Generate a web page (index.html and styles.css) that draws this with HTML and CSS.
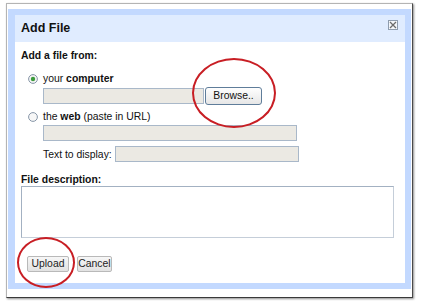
FILE: index.html
```html
<!DOCTYPE html>
<html>
<head>
<meta charset="utf-8">
<link rel="stylesheet" href="styles.css">
</head>
<body>
<div class="frame">
  <div class="dialog">
    <div class="titlebar">
      <span class="title">Add File</span>
      <span class="close"><svg width="8" height="8" viewBox="0 0 8 8"><path d="M1 1L7 7M7 1L1 7" stroke="#6b6b6b" stroke-width="1.3"/></svg></span>
    </div>
    <div class="content">
      <div class="heading">Add a file from:</div>
      <div class="radio-row r1">
        <svg class="radio" width="10" height="10" viewBox="0 0 10 10"><circle cx="5" cy="5" r="4.4" fill="#f4f4f4" stroke="#8796a8" stroke-width="1"/><circle cx="5" cy="5" r="2.2" fill="#3c9b3c"/></svg>
        <span>your <b>computer</b></span>
      </div>
      <div class="file-row">
        <input class="field file-field" type="text">
        <button class="browse">Browse..</button>
      </div>
      <div class="radio-row r2">
        <svg class="radio" width="10" height="10" viewBox="0 0 10 10"><circle cx="5" cy="5" r="4.4" fill="#f7f7f7" stroke="#8796a8" stroke-width="1"/></svg>
        <span>the <b>web</b> (paste in URL)</span>
      </div>
      <input class="field url-field" type="text">
      <div class="display-row">
        <span class="display-label">Text to display:</span>
        <input class="field display-field" type="text">
      </div>
      <div class="heading desc-label">File description:</div>
      <div class="textarea"></div>
      <div class="actions">
        <button class="btn upload">Upload</button>
        <button class="btn cancel">Cancel</button>
      </div>
    </div>
  </div>
  <span class="mark mark-browse"></span>
  <span class="mark mark-upload"></span>
</div>
</body>
</html>
```
FILE: styles.css
```css
html, body {
  margin: 0;
  padding: 0;
  background: #ffffff;
}
body {
  width: 424px;
  height: 302px;
  overflow: hidden;
  font-family: "Liberation Sans", Arial, sans-serif;
  font-size: 10.4px;
  color: #111;
}
.frame {
  position: relative;
  box-sizing: border-box;
  width: 407px;
  height: 295px;
  margin: 3px 0 0 6px;
  border: 1px solid;
  border-color: #b4b4b4 #4a4a4a #3a3a3a #b4b4b4;
  box-shadow: 1px 1px 2px rgba(0,0,0,0.45);
  padding: 5px 1px 8px 1px;
  background: #fff;
}
.dialog {
  box-sizing: border-box;
  height: 100%;
  background: #c3d9ff;
  padding: 6px 6px 6px 7px;
  display: flex;
  flex-direction: column;
}
.titlebar {
  height: 27px;
  background: #e0ecff;
  display: flex;
  align-items: flex-start;
  justify-content: space-between;
  padding: 0 7px 0 6px;
}
.title {
  font-size: 12.5px;
  font-weight: bold;
  line-height: 27px;
  color: #111;
}
.close {
  box-sizing: border-box;
  margin-top: 5px;
  width: 10px;
  height: 10px;
  border: 1px solid #8e9cae;
  background: #f4f7fb;
  display: flex;
  align-items: center;
  justify-content: center;
}
.close svg { display: block; }
.content {
  flex: 1;
  background: #fff;
  padding: 7px 6px 0 6px;
}
.heading {
  font-weight: bold;
  line-height: 13px;
}
.radio-row {
  display: flex;
  align-items: center;
  height: 13px;
  line-height: 13px;
  padding-left: 7px;
}
.radio { display: block; margin-right: 5px; }
.r1 { margin-top: 10px; }
.r2 { margin-top: 5px; }
.field {
  display: block;
  box-sizing: border-box;
  height: 16px;
  margin: 0;
  padding: 0;
  border: 1px solid #a9b8c9;
  background: #ebe9e3;
  appearance: none;
  -webkit-appearance: none;
  border-radius: 0;
  outline: none;
}
.file-row {
  display: flex;
  align-items: flex-start;
  margin-top: 2px;
  padding-left: 22px;
}
.file-field { width: 161px; margin-top: 1px; }
.browse {
  box-sizing: border-box;
  width: 57px;
  height: 18px;
  margin: 0 0 0 1px;
  padding: 0;
  border: 1px solid #5f7d9a;
  border-radius: 3px;
  background: linear-gradient(#fefefe, #e6e6e6);
  font-family: "Liberation Sans", Arial, sans-serif;
  font-size: 10.4px;
  color: #111;
  line-height: 16px;
}
.url-field {
  width: 254px;
  margin: 2px 0 0 22px;
}
.display-row {
  display: flex;
  align-items: center;
  margin-top: 5px;
  padding-left: 22px;
  height: 16px;
}
.display-label { width: 72px; }
.display-field { width: 184px; }
.desc-label { margin-top: 11px; }
.textarea {
  box-sizing: border-box;
  width: 373px;
  height: 52px;
  border: 1px solid #a9b5c4;
  border-color: #a3b1c2 #c5ced9 #c5ced9 #a3b1c2;
  background: #fff;
}
.actions {
  display: flex;
  gap: 8px;
  margin-top: 18px;
  padding-left: 6px;
}
.btn {
  box-sizing: border-box;
  height: 16px;
  margin: 0;
  padding: 0;
  border: 1px solid #b9b9b9;
  border-radius: 2px;
  background: linear-gradient(#f7f7f7, #e2e2e2);
  font-family: "Liberation Sans", Arial, sans-serif;
  font-size: 10.4px;
  color: #222;
  line-height: 14px;
}
.upload { width: 42px; }
.cancel { width: 35px; }
.mark {
  position: absolute;
  box-sizing: border-box;
  border: 2px solid #c81e24;
  border-radius: 50%;
}
.mark-browse {
  left: 185px;
  top: 54px;
  width: 84px;
  height: 70px;
}
.mark-upload {
  left: 10px;
  top: 233px;
  width: 58px;
  height: 51px;
}
```
